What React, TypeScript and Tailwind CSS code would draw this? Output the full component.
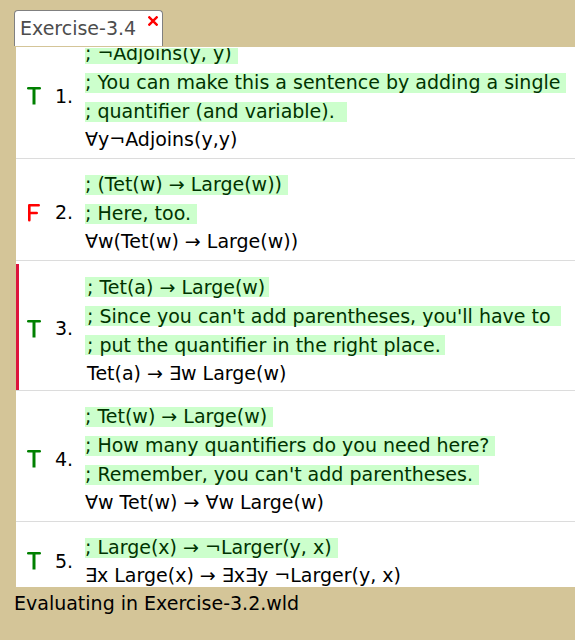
type Sentence = {
  value: "T" | "F";
  comments: string[];
  formula: string;
  selected?: boolean;
};

const sentences: Sentence[] = [
  {
    value: "T",
    comments: [
      "; ¬Adjoins(y, y)",
      "; You can make this a sentence by adding a single",
      "; quantifier (and variable). ",
    ],
    formula: "∀y¬Adjoins(y,y)",
  },
  {
    value: "F",
    comments: ["; (Tet(w) → Large(w))", "; Here, too."],
    formula: "∀w(Tet(w) → Large(w))",
  },
  {
    value: "T",
    comments: [
      "; Tet(a) → Large(w)",
      "; Since you can't add parentheses, you'll have to ",
      "; put the quantifier in the right place.",
    ],
    formula: "Tet(a) → ∃w Large(w)",
    selected: true,
  },
  {
    value: "T",
    comments: [
      "; Tet(w) → Large(w)",
      "; How many quantifiers do you need here?",
      "; Remember, you can't add parentheses.",
    ],
    formula: "∀w Tet(w) → ∀w Large(w)",
  },
  {
    value: "T",
    comments: ["; Large(x) → ¬Larger(y, x)"],
    formula: "∃x Large(x) → ∃x∃y ¬Larger(y, x)",
  },
];

function TruthMark({ value }: { value: "T" | "F" }) {
  return (
    <svg
      viewBox="0 0 14 18"
      role="img"
      aria-label={value === "T" ? "True" : "False"}
      className={`h-[18px] w-[14px] ${value === "T" ? "text-[#008000]" : "text-[#ff0000]"}`}
      fill="none"
      stroke="currentColor"
      strokeWidth="2.6"
      strokeLinejoin="round"
    >
      {value === "T" ? (
        <>
          <path d="M1.3 1.3H12.7" strokeLinecap="round" />
          <path d="M7 1.5V17.5" strokeWidth="3" />
        </>
      ) : (
        <path d="M11.7 1.3H2.3V16.2M2.3 9H9.7" strokeLinecap="round" />
      )}
    </svg>
  );
}

function SentenceRow({ sentence, index }: { sentence: Sentence; index: number }) {
  const { selected } = sentence;
  return (
    <li className="relative flex border-b border-[#dcdcdc]">
      {selected && <span className="absolute top-[3px] bottom-0 left-0 w-[3px] bg-[#dc143c]" />}
      <div className="flex w-[69px] shrink-0 items-center gap-[14px] pt-[6px] pl-[11px]">
        <TruthMark value={sentence.value} />
        <span>{index}.</span>
      </div>
      <div className={`min-w-0 flex-1 whitespace-pre pt-[11px] ${selected ? "pb-[2px]" : "pb-[5px]"}`}>
        {sentence.comments.map((text) => (
          <div key={text} className="flex h-[29px] items-center">
            <span
              className={`h-5 bg-[#ccffcc] text-[#003300] ${selected ? "pr-1 pl-[2px] leading-5" : "pr-[6px] leading-[18px]"}`}
            >
              {text}
            </span>
          </div>
        ))}
        <div className={selected ? "pl-[2px]" : "leading-[27px]"}>{sentence.formula}</div>
      </div>
    </li>
  );
}

export default function App() {
  return (
    <div className="flex h-screen flex-col bg-[#d4c598] font-['DejaVu_Sans',sans-serif] text-[19px] leading-[29px] text-black">
      <header className="flex pt-[10px] pl-[14px]">
        <div className="flex h-9 rounded-t border border-b-0 border-[#808080] bg-white">
          <button type="button" className="pl-[5px] text-[#4d4d4d]">
            Exercise-3.4
          </button>
          <button type="button" aria-label="Close Exercise-3.4" className="flex items-start pt-[5px] pr-1 pl-3">
            <svg viewBox="0 0 10 10" className="size-[10px]" stroke="#ff0000" strokeWidth="2.4">
              <path d="M0.5 0.5L9.5 9.5M9.5 0.5L0.5 9.5" />
            </svg>
          </button>
        </div>
      </header>
      <main className="mt-px ml-4 min-h-0 flex-1 overflow-hidden border-t border-white bg-white">
        <ol className="-mt-5">
          {sentences.map((sentence, i) => (
            <SentenceRow key={i} sentence={sentence} index={i + 1} />
          ))}
        </ol>
      </main>
      <footer className="h-[53px] pt-[2px] pl-[14px]">Evaluating in Exercise-3.2.wld</footer>
    </div>
  );
}
